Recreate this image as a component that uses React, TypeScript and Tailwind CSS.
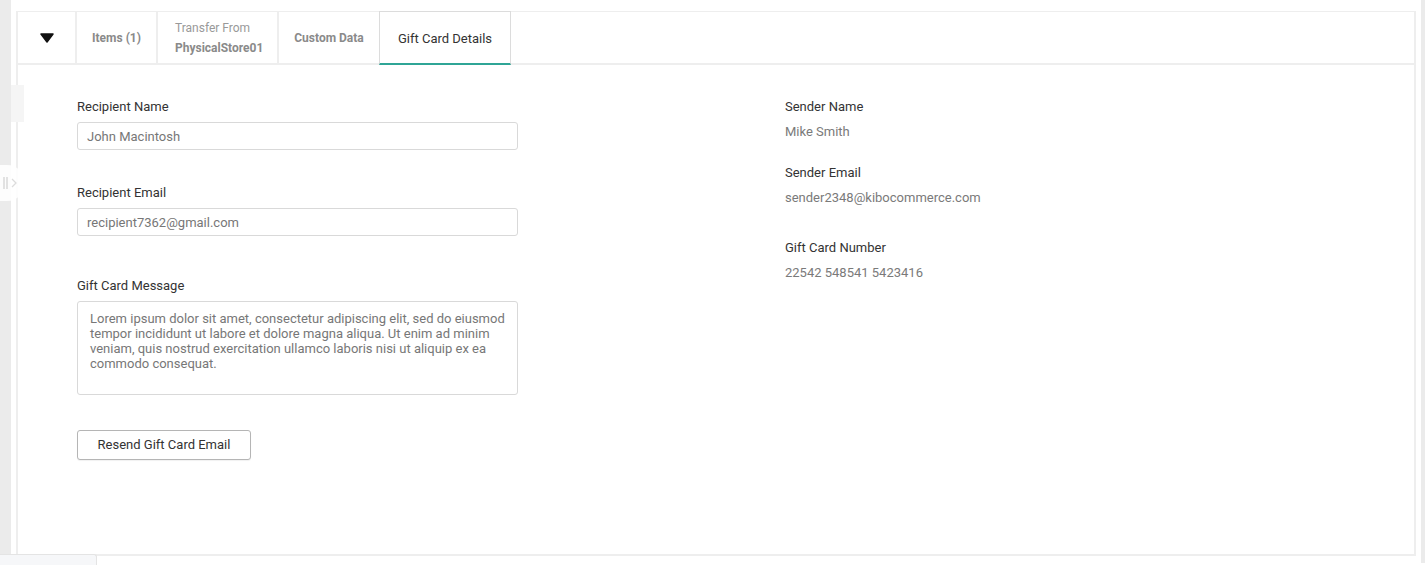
import React from "react";

const labelCls = "text-[13px] leading-4 text-[#333]";
const valueCls = "text-[13px] leading-4 text-[#7a7a7a]";

function Field({ label, value }: { label: string; value: string }) {
  return (
    <div className="flex flex-col gap-[7px]">
      <label className={labelCls}>{label}</label>
      <input
        readOnly
        value={value}
        className="h-7 w-[441px] rounded-[3px] border border-[#d9d9d9] px-[9px] text-[13px] text-[#777] outline-none"
      />
    </div>
  );
}

function ReadOnly({ label, value }: { label: string; value: string }) {
  return (
    <div className="flex flex-col gap-[9px]">
      <span className={labelCls}>{label}</span>
      <span className={valueCls}>{value}</span>
    </div>
  );
}

export default function App() {
  return (
    <div className="relative flex h-[565px] w-[1425px] overflow-hidden bg-white font-['Roboto',sans-serif]">
      {/* left rail */}
      <div className="h-[554px] w-[11px] bg-[#ebebeb]" />

      <div className="pl-[5px] pr-[5px] pt-[11px]">
        <div className="flex h-[545px] w-[1400px] flex-col border-2 border-t border-[#eeeeee]">
          {/* tabs */}
          <div className="flex h-[53px] border-b-2 border-[#eeeeee]">
            <div className="flex w-[59px] items-center justify-center border-r-2 border-[#eeeeee]">
              <svg width="14" height="10" viewBox="0 0 14 10">
                <path d="M1 1h12L7 9z" fill="#111" stroke="#111" strokeWidth="1.5" strokeLinejoin="round" />
              </svg>
            </div>
            <div className="flex w-[81px] items-center justify-center border-r-2 border-[#eeeeee] text-[12px] font-bold text-[#8a8a8a]">
              Items (1)
            </div>
            <div className="flex w-[121px] flex-col items-start justify-center gap-[4px] border-r-2 border-[#eeeeee] pl-[17px] text-[12px] leading-4 text-[#999]">
              <span>Transfer From</span>
              <span className="font-bold text-[#8a8a8a]">PhysicalStore01</span>
            </div>
            <div className="flex w-[100px] items-center justify-center text-[12px] font-bold text-[#8a8a8a]">
              Custom Data
            </div>
            <div className="-mb-[2px] -mt-[1px] flex w-[132px] items-center justify-center border border-b-2 border-[#dcdcdc] border-b-[#2fa596] pt-[2px] text-[13px] text-[#333]">
              Gift Card Details
            </div>
          </div>

          {/* body */}
          <div className="flex pl-[59px] pt-[34px]">
            <div className="flex w-[708px] flex-col">
              <Field label="Recipient Name" value="John Macintosh" />
              <div className="mt-[35px]">
                <Field label="Recipient Email" value="recipient7362@gmail.com" />
              </div>
              <div className="mt-[42px] flex flex-col gap-[7px]">
                <label className={labelCls}>Gift Card Message</label>
                <textarea
                  readOnly
                  className="h-[94px] w-[441px] resize-none rounded-[3px] border border-[#d9d9d9] px-3 pt-[9px] text-[13px] leading-[15px] text-[#777] outline-none"
                  value="Lorem ipsum dolor sit amet, consectetur adipiscing elit, sed do eiusmod tempor incididunt ut labore et dolore magna aliqua. Ut enim ad minim veniam, quis nostrud exercitation ullamco laboris nisi ut aliquip ex ea commodo consequat."
                />
              </div>
              <button className="mt-[35px] h-[30px] w-[174px] rounded-[3px] border border-[#b5b5b5] bg-white text-[13px] text-[#333] shadow-[0_1px_1px_rgba(0,0,0,0.06)]">
                Resend Gift Card Email
              </button>
            </div>

            <div className="flex flex-col">
              <ReadOnly label="Sender Name" value="Mike Smith" />
              <div className="mt-[25px]">
                <ReadOnly label="Sender Email" value="sender2348@kibocommerce.com" />
              </div>
              <div className="mt-[34px]">
                <ReadOnly label="Gift Card Number" value="22542 548541 5423416" />
              </div>
            </div>
          </div>
        </div>
      </div>

      {/* right rail */}
      <div className="h-[563px] w-[4px] bg-[#ebebeb]" />

      {/* faint overlays on the left rail */}
      <div className="absolute left-[11px] top-[85px] h-[37px] w-[13px] bg-[#f5f5f5]" />
      <div className="absolute left-0 top-[165px] flex h-[36px] w-[25px] items-center gap-[3px] rounded-r-full bg-white/90 pl-[3px] text-[#dcdcdc]">
        <div className="flex gap-[1px]">
          <span className="h-[12px] w-[2px] bg-[#e2e2e2]" />
          <span className="h-[12px] w-[2px] bg-[#e2e2e2]" />
        </div>
        <svg width="6" height="10" viewBox="0 0 6 10">
          <path d="M1 1l4 4-4 4" fill="none" stroke="#dcdcdc" strokeWidth="1.3" />
        </svg>
      </div>
      <div className="absolute bottom-0 left-0 h-[11px] w-[97px] rounded-tr-[3px] border-r border-t border-[#e4e4e4] bg-[#f6f7f9]" />
    </div>
  );
}
